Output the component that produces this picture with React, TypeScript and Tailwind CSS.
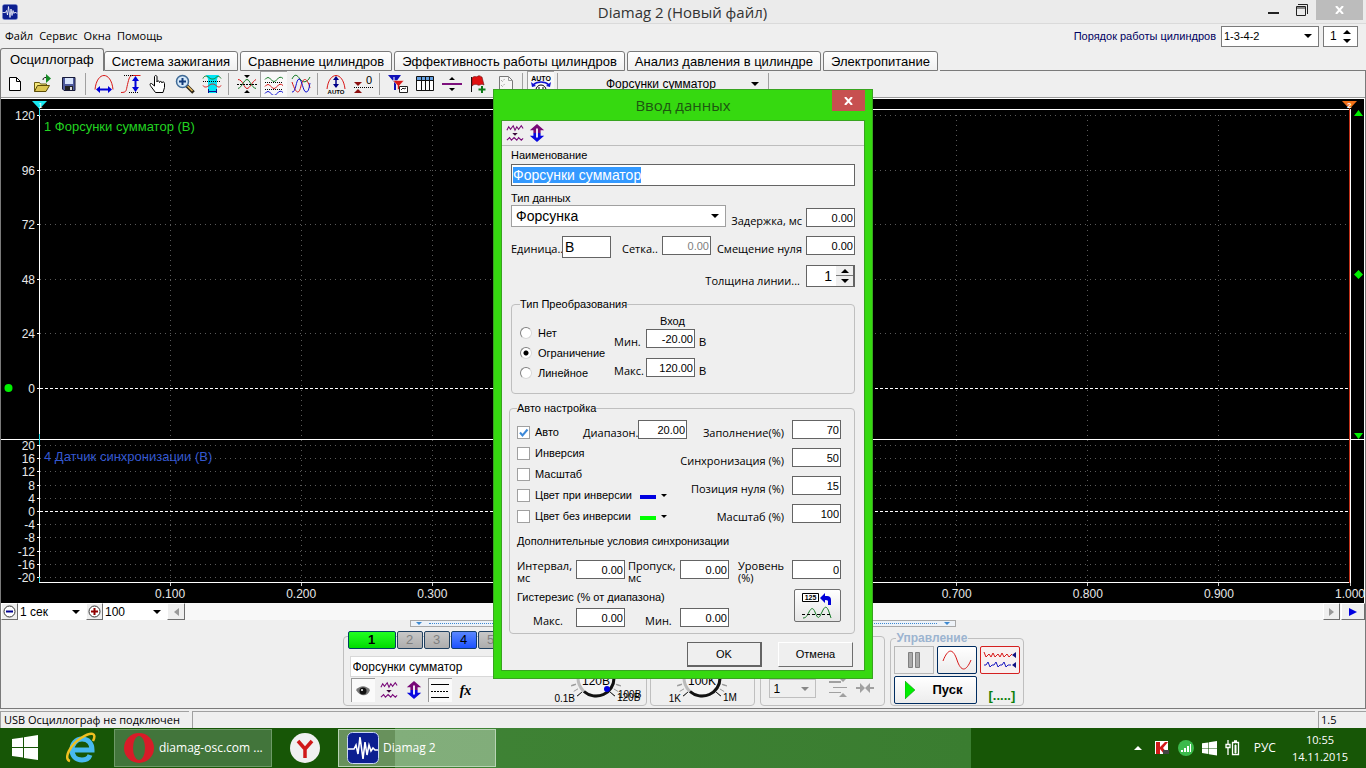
import { useEffect, useRef, type ReactNode } from 'react';
import clsx from 'clsx';

const FINE = "font-['Liberation_Sans',Arial,sans-serif]";
const TAHOMA = "font-['Open_Sans','Noto_Sans',sans-serif]";

/* ---------- small shared controls ---------- */

function DownArrow({ className }: { className?: string }) {
    return (
        <svg viewBox="0 0 8 4" className={clsx('pointer-events-none h-1 w-2', className)} aria-hidden="true">
            <path d="M0 0h8L4 4z" fill="currentColor" />
        </svg>
    );
}

function Combo({ label, value, className, selectClass }: { label: string; value: string; className?: string; selectClass?: string }) {
    return (
        <div className={clsx('relative flex items-center', className)}>
            <select aria-label={label} className={clsx('h-full w-full appearance-none bg-transparent outline-none', selectClass)}>
                <option>{value}</option>
            </select>
            <DownArrow className="absolute right-1.5" />
        </div>
    );
}

function NumField({ id, value, disabled, label }: { id?: string; value: string; disabled?: boolean; label?: string }) {
    return (
        <input
            id={id}
            aria-label={label}
            defaultValue={value}
            disabled={disabled}
            className={clsx(
                'h-[19px] w-[49px] shrink-0 border border-[#646464] bg-white pr-px text-right text-[11px] leading-4 outline-none',
                FINE,
                disabled ? 'text-[#808080]' : 'text-black'
            )}
        />
    );
}

function FieldLabel({ htmlFor, className, children }: { htmlFor: string; className?: string; children: ReactNode }) {
    return (
        <label htmlFor={htmlFor} className={clsx('whitespace-nowrap text-[11px] leading-3', TAHOMA, className)}>
            {children}
        </label>
    );
}

/* ---------- icons ---------- */

function Icon({ children, size = 20 }: { children: ReactNode; size?: number }) {
    return (
        <svg width={size} height={size} viewBox="0 0 20 20" fill="none" aria-hidden="true">
            {children}
        </svg>
    );
}

const NewIcon = () => (
    <Icon>
        <path d="M4.500 3.500h7l4 4v9h-11z" fill="#fff" stroke="#000" />
        <path d="M11.500 3.500v4h4" stroke="#000" />
    </Icon>
);

const OpenIcon = () => (
    <Icon>
        <path d="M2.500 17.500v-9h5l1 1.500h6v2" fill="#f5e97c" stroke="#6b5c10" />
        <path d="M2.500 17.500l3-6h12l-3.500 6z" fill="#dcc653" stroke="#5c4d08" />
        <path d="M11 6c0-2 1-2.500 3-2.500" stroke="#111" />
        <path d="M14 0l5 4.500-5 4.500z" fill="#168a25" />
    </Icon>
);

const SaveIcon = () => (
    <Icon>
        <path d="M3.500 3.500h12.500v13h-11l-1.500-1.500z" fill="#4e5a9c" stroke="#181b3a" />
        <path d="M6 4h8v6H6z" fill="#d8e4fa" />
        <path d="M6 12h8v4H6z" fill="#222" />
        <path d="M11 13h2v3h-2z" fill="#ddd" />
    </Icon>
);

const WidthIcon = () => (
    <Icon>
        <path d="M1 15.500C2 6 6 1.500 10 1.500s8 4.500 9 14" stroke="#d81818" />
        <path d="M4 15.500h12" stroke="#0000d8" strokeWidth="2" />
        <path d="M2 15.500l4-3.500v7zM18 15.500l-4-3.500v7z" fill="#0000d8" />
    </Icon>
);

const HeightIcon = () => (
    <Icon>
        <path d="M0 18.500c6 0 5-2 6.500-8s2-9 5-9h8" stroke="#d81818" />
        <path d="M3 1.500h9M8 18.500h9" stroke="#000" strokeDasharray="1 1" />
        <path d="M14.500 5v10" stroke="#0000d8" strokeWidth="2" />
        <path d="M14.500 2l3.500 5h-7zM14.500 18l3.500-5h-7z" fill="#0000d8" />
    </Icon>
);

const HandIcon = () => (
    <Icon>
        <path
            d="M7.500 18.500L3 12.500c-1.500-2-1-3.500.5-3l3 2.500V3c0-2 2.500-2 2.500 0v5c0-1.500 2.500-1.500 2.500.5 0-1.500 2.500-1.500 2.500.5 0-1.500 2.500-1.500 2.500.5v4l-1.500 5z"
            fill="#fff"
            stroke="#000"
        />
    </Icon>
);

const ZoomIcon = () => (
    <Icon>
        <path d="M11.500 11.500l7 7" stroke="#2b2417" strokeWidth="3.500" />
        <path d="M12.500 12l5 5" stroke="#e9bc60" strokeWidth="1.500" />
        <circle cx="7.500" cy="7.500" r="6" fill="#d4e8f9" stroke="#3f6a96" strokeWidth="1.500" />
        <path d="M7.500 4v7M4 7.500h7" stroke="#123c7c" strokeWidth="2" />
    </Icon>
);

const FitIcon = () => (
    <Icon>
        <path d="M4 1h13l-2 4v14H6V5z" fill="#00e5f5" />
        <path d="M1 4.500c1-3 4-3 6-1s5 2 7 0 4-1 5 1" stroke="#187c28" />
        <path d="M1 11.500c1 2 4 2 6 0s5-2 7 0 4 2 5 0" stroke="#d81818" />
        <path d="M1 7.500h18" stroke="#000" strokeDasharray="1 1" />
        <path d="M6.500 15v4M14.500 15v4M7 17.500h8" stroke="#10108c" />
    </Icon>
);

const CrossWavesIcon = () => (
    <Icon>
        <path d="M1 5.500c5 0 6 9 9 9s5-7 9-9" stroke="#d81818" />
        <path d="M1 14.500c4-1 6-9 9-9s4 8 9 9" stroke="#187c28" />
        <path d="M0 10.500h20" stroke="#000" strokeDasharray="2 1" />
        <path d="M7 1h6l-3 3zM7 19h6l-3-3z" fill="#000" />
    </Icon>
);

const StackWavesIcon = () => (
    <Icon>
        <path d="M1 4.500q3-4 6 0t6 0 6-1" stroke="#187c28" />
        <path d="M1 11.500q3-4 6 0t6 0 6-1" stroke="#d81818" />
        <path d="M1 18.500q3-4 6 0t6 0 6-1" stroke="#1010d0" />
        <path d="M1 7.500h18M1 14.500h18" stroke="#000" strokeDasharray="1 1" />
    </Icon>
);

const OverlayWavesIcon = () => (
    <Icon>
        <path d="M1 5c3-6 5-4 8 0s7 4 10-2" stroke="#187c28" />
        <path d="M1 8c4 12 7 13 9 4s6-9 9 2" stroke="#d81818" />
        <path d="M1 18c4 1 4-13 7-13s4 13 7 13 3-5 4-9" stroke="#1010d0" />
    </Icon>
);

const AutoHumpIcon = () => (
    <Icon>
        <path d="M1 15C2 6 6 1.500 10 1.500S18 6 19 15" stroke="#d81818" />
        <path d="M10 4v9" stroke="#000088" strokeWidth="1.500" />
        <path d="M10 2l3 4H7zM10 14l3-4H7z" fill="#000088" />
        <text x="10" y="20" fontSize="6" fontWeight="bold" textAnchor="middle" fill="#000" fontFamily="Liberation Sans">
            AUTO
        </text>
    </Icon>
);

const ZeroIcon = () => (
    <Icon>
        <path d="M1 8h8l-4 4zM1 19h8l-4-4z" fill="#8c1010" />
        <path d="M1 13.500h19" stroke="#000" strokeDasharray="1 1" />
        <text x="13" y="10" fontSize="11" fill="#000" fontFamily="Liberation Sans">
            0
        </text>
    </Icon>
);

const MarkersIcon = () => (
    <Icon>
        <path d="M0 1h13L8 8v8H6V8z" fill="#1010b8" />
        <path d="M6 3v4" stroke="#fff" />
        <path d="M5 6.500h11l-4.500 5v4h-2v-4z" fill="#d81818" stroke="#fff" strokeWidth=".5" />
        <path d="M11.500 12.500h8v6h-8z" fill="#fff" stroke="#222" />
        <path d="M13 16l2-2 1 1 2-1" stroke="#222" />
    </Icon>
);

const TableIcon = () => (
    <Icon>
        <path d="M1.500 2.500h17v14h-17z" fill="#fff" stroke="#111" />
        <path d="M2 3h16v3H2z" fill="#64a0e0" />
        <path d="M6.500 3v13M10.500 3v13M14.500 3v13M2 6.500h16" stroke="#111" />
    </Icon>
);

const SplitIcon = () => (
    <Icon>
        <path d="M0 10h20" stroke="#7c107c" strokeWidth="2" />
        <path d="M7 6h6l-3-3zM7 14h6l-3 3z" fill="#000" />
    </Icon>
);

const FlagIcon = () => (
    <Icon>
        <path d="M2.500 3v15" stroke="#111" />
        <path d="M3 4c3-3 4 0 6-2 2-1 3 1 4 1l2 8c-3-2-4 1-6 0s-4-1-6 1z" fill="#e01010" stroke="#661010" strokeWidth=".6" />
        <path d="M13 12v7M9.500 15.500h7" stroke="#0d7a18" strokeWidth="2" />
    </Icon>
);

const ListIcon = () => (
    <Icon>
        <path d="M3.500 2.500h9l4 4v12h-13z" fill="#f6f6f6" stroke="#777" />
        <path d="M5 6l1.500 1.500L9 4.500M5 11l1.500 1.500L9 9.500M5 16l1.500 1.500L9 14.500" stroke="#888" strokeDasharray="1 1" />
        <path d="M12.500 2.500v4h4" stroke="#999" />
    </Icon>
);

const AutoClockIcon = () => (
    <Icon>
        <text x="10" y="6" fontSize="7" fontWeight="bold" textAnchor="middle" fill="#000" fontFamily="Liberation Sans">
            AUTO
        </text>
        <path d="M2 10c4-4 12-4 16 0" stroke="#1010d0" strokeWidth="1.500" />
        <path d="M0 7l1 5 4-1zM20 7l-1 5-4-1z" fill="#1010d0" />
        <circle cx="10" cy="15" r="5" fill="#fff" stroke="#000" />
        <path d="M8 12v2M12 12v2" stroke="#000" />
    </Icon>
);

const SquiggleIcon = () => (
    <Icon size={18}>
        <path d="M1 7l2-4 2 3 3-4 2 5 2-4 2 3 3-4 2 3" stroke="#780878" strokeWidth="1.200" />
        <path d="M1 18l3-3 2 3 3-3 3 3 2-3 3 3 2-2" stroke="#780878" strokeWidth="1.200" />
        <path d="M7 10h6l-3 3z" fill="#3a083a" />
    </Icon>
);

const UpDownIcon = () => (
    <Icon size={18}>
        <path d="M10 0l8 7h-4v3H6V7H2z" fill="#780878" />
        <path d="M10 20l8-7h-4v-3H6v3H2z" fill="#0808e0" />
        <path d="M10 5v10" stroke="#fff" strokeWidth="2" />
    </Icon>
);

function AppIcon({ size }: { size: number }) {
    return (
        <svg width={size} height={size} viewBox="0 0 32 32" aria-hidden="true">
            <rect x=".5" y=".5" width="31" height="31" rx="5" fill="#0c1f90" stroke="#c8d4f4" />
            <path d="M1 17h6l2-4 2 9 2-17 3 22 2-17 2 13 2-10 2 6 2-3 2 2h3" fill="none" stroke="#fff" strokeWidth="1.600" />
        </svg>
    );
}

/* ---------- window chrome ---------- */

function TitleBar() {
    return (
        <header className="flex h-6 items-start border-b border-[#dadada] bg-[#ebebeb]">
            <div className="flex flex-1 pt-1 pl-0.5">
                <AppIcon size={16} />
            </div>
            <h1 className={clsx('text-[15px] leading-6 text-[#333]', TAHOMA)}>Diamag 2 (Новый файл)</h1>
            <div className="flex flex-1 justify-end pr-[3px]">
                <button type="button" aria-label="Свернуть" className="flex h-5 w-7 items-center justify-center">
                    <svg width="12" height="12"><path d="M0 8h11v2H0z" fill="#222" /></svg>
                </button>
                <button type="button" aria-label="Развернуть" className="flex h-5 w-7 items-center justify-center">
                    <svg width="12" height="12" fill="none" stroke="#222">
                        <path d="M.5 2.500h9v9h-9zM.5 4h9M2 .5h9.500V10" />
                    </svg>
                </button>
                <button type="button" aria-label="Закрыть" className="flex h-5 w-[47px] items-center justify-center bg-[#bcbcbc]">
                    <svg width="9" height="8"><path d="M1 0l7 8M8 0L1 8" stroke="#fff" strokeWidth="2" /></svg>
                </button>
            </div>
        </header>
    );
}

function MenuBar() {
    return (
        <div className="flex h-6 items-center pr-2">
            <nav className={clsx('flex gap-1.5 pt-px pl-[5px] text-[11px]', TAHOMA)}>
                {['Файл', 'Сервис', 'Окна', 'Помощь'].map(item => (
                    <button key={item} type="button">{item}</button>
                ))}
            </nav>
            <label htmlFor="order" className="ml-auto text-[11px] text-[#000060]">Порядок работы цилиндров</label>
            <div className="relative ml-[5px] flex h-[21px] w-[98px] items-center border border-[#7a7a7a] bg-white">
                <select id="order" className="h-full w-full appearance-none pl-0.5 text-[11px] outline-none">
                    <option>1-3-4-2</option>
                </select>
                <DownArrow className="absolute right-1.5" />
            </div>
            <div className="ml-1 flex h-[21px] w-[35px] items-center border border-[#7a7a7a] bg-white pr-1.5">
                <input aria-label="Цилиндр" defaultValue="1" className="w-[14px] pl-1.5 text-[12px] outline-none" />
                <div className="ml-auto flex flex-col gap-[5px]">
                    <button type="button" aria-label="Больше"><DownArrow className="rotate-180" /></button>
                    <button type="button" aria-label="Меньше"><DownArrow /></button>
                </div>
            </div>
        </div>
    );
}

const TABS = [
    'Осциллограф',
    'Система зажигания',
    'Сравнение цилиндров',
    'Эффективность работы цилиндров',
    'Анализ давления в цилиндре',
    'Электропитание'
];

function Tabs() {
    return (
        <div role="tablist" className="flex h-[23px] items-end">
            {TABS.map((tab, i) => (
                <button
                    key={tab}
                    role="tab"
                    type="button"
                    aria-selected={i === 0}
                    className={clsx(
                        'whitespace-nowrap rounded-t-[3px] border border-[#7a7a7a] text-[13px]',
                        i === 0 ? 'h-[23px] border-b-0 px-[9px]' : 'mr-0.5 h-5 bg-linear-to-b from-white to-[#f0f0f0] px-[7px]'
                    )}
                >
                    {tab}
                </button>
            ))}
            <div className="flex-1 self-end border-b border-[#7a7a7a]" />
        </div>
    );
}

type Tool = { name: string; icon: ReactNode; pressed?: boolean };

const TOOL_GROUPS: Tool[][] = [
    [
        { name: 'Новый', icon: <NewIcon /> },
        { name: 'Открыть', icon: <OpenIcon /> },
        { name: 'Сохранить', icon: <SaveIcon /> }
    ],
    [
        { name: 'Ширина', icon: <WidthIcon /> },
        { name: 'Высота', icon: <HeightIcon /> },
        { name: 'Рука', icon: <HandIcon /> },
        { name: 'Лупа', icon: <ZoomIcon /> },
        { name: 'Вписать', icon: <FitIcon /> }
    ],
    [
        { name: 'Совместить', icon: <CrossWavesIcon /> },
        { name: 'Раздельно', icon: <StackWavesIcon />, pressed: true },
        { name: 'Наложение', icon: <OverlayWavesIcon /> }
    ],
    [
        { name: 'Авто', icon: <AutoHumpIcon /> },
        { name: 'Ноль', icon: <ZeroIcon /> }
    ],
    [
        { name: 'Маркеры', icon: <MarkersIcon /> },
        { name: 'Таблица', icon: <TableIcon /> },
        { name: 'Разделить', icon: <SplitIcon /> },
        { name: 'Флаг', icon: <FlagIcon /> },
        { name: 'Список', icon: <ListIcon /> }
    ],
    [{ name: 'Автонастройка', icon: <AutoClockIcon />, pressed: true }]
];

function Toolbar() {
    return (
        <div className="flex h-[27px] items-center border-b border-[#9a9a9a]">
            {TOOL_GROUPS.map((group, i) => (
                <div key={i} className="flex items-center">
                    {group.map(tool => (
                        <button
                            key={tool.name}
                            type="button"
                            aria-label={tool.name}
                            className={clsx(
                                'flex h-[26px] w-[27px] items-center justify-center',
                                tool.pressed && 'border-t border-l border-[#a0a0a0] bg-[#f8f8f8]'
                            )}
                        >
                            {tool.icon}
                        </button>
                    ))}
                    <div className="mr-1 ml-[3px] h-[22px] w-px bg-[#a0a0a0]" />
                </div>
            ))}
            <Combo label="Канал" value="Форсунки сумматор" className="h-5 w-[203px]" selectClass="pl-11 text-[12px]" />
            <div className="ml-[3px] h-[22px] w-px bg-[#a0a0a0]" />
        </div>
    );
}

/* ---------- chart ---------- */

const UPPER = [
    { v: '120', y: 16 },
    { v: '96', y: 71 },
    { v: '72', y: 125 },
    { v: '48', y: 180 },
    { v: '24', y: 234 },
    { v: '0', y: 289 }
];

const LOWER = [
    { v: '20', y: 346 },
    { v: '16', y: 359 },
    { v: '12', y: 372 },
    { v: '8', y: 386 },
    { v: '4', y: 399 },
    { v: '0', y: 412 },
    { v: '-4', y: 425 },
    { v: '-8', y: 438 },
    { v: '-12', y: 452 },
    { v: '-16', y: 465 },
    { v: '-20', y: 478 }
];

const LEVELS = [...UPPER, ...LOWER];
const TIMES = ['0.100', '0.200', '0.300', '0.400', '0.500', '0.600', '0.700', '0.800', '0.900', '1.000'];

function Chart() {
    return (
        <div className="flex h-[505px] border-t border-r border-white bg-black">
            <svg width="38" height="504" className="shrink-0" fontSize="12" fill="#e8e8e8">
                {LEVELS.map(l => (
                    <g key={l.y}>
                        <text x="34" y={l.y + 5} textAnchor="end">{l.v}</text>
                        <path d={`M36 ${l.y}h2v1h-2z`} fill="#fff" />
                    </g>
                ))}
                <circle cx="7.500" cy="289" r="4" fill="#00f000" />
                <path d="M0 340h38v1H0z" fill="#fff" />
            </svg>
            <div className="min-w-0 flex-1">
                <svg width="100%" height="504" className="block overflow-visible" fontSize="12">
                    <g shapeRendering="crispEdges">
                        {LEVELS.map(l => (
                            <line
                                key={l.y}
                                x1="1"
                                x2="100%"
                                y1={l.y + 0.5}
                                y2={l.y + 0.5}
                                stroke={l.v === '0' ? '#fff' : '#5a5a5a'}
                                strokeDasharray={l.v === '0' ? '3 2' : '1 4'}
                            />
                        ))}
                        {TIMES.map((t, i) => (
                            <g key={t}>
                                <line x1={`${(i + 1) * 10}%`} x2={`${(i + 1) * 10}%`} y1="16" y2="483" stroke="#5a5a5a" strokeDasharray="1 4" />
                                <line x1={`${(i + 1) * 10}%`} x2={`${(i + 1) * 10}%`} y1="483" y2="487" stroke="#ccc" />
                            </g>
                        ))}
                        <line x1="0" x2="100%" y1="10.500" y2="10.500" stroke="#fff" />
                        <line x1="0" x2="100%" y1="340.500" y2="340.500" stroke="#fff" />
                        <line x1="0" x2="100%" y1="483.500" y2="483.500" stroke="#fff" />
                        <path d="M.5 10v474" stroke="#fff" />
                        <path d="M.5 9v8M.5 335v11M.5 478v5" stroke="#20d8e0" />
                    </g>
                    {TIMES.map((t, i) => (
                        <text key={t} x={`${(i + 1) * 10}%`} y="499" textAnchor="middle" fill="#e8e8e8">{t}</text>
                    ))}
                    <path d="M-7 2H8L.5 10z" fill="#18e8f0" />
                    <text x="-1" y="9" fontSize="8" fill="#fff">1</text>
                    <text x="5" y="32" fontSize="13" fill="#22d422">1 Форсунки сумматор (В)</text>
                    <text x="5" y="362" fontSize="13" fill="#3458d0">4 Датчик синхронизации (В)</text>
                </svg>
            </div>
            <svg width="14" height="504" className="shrink-0 overflow-visible">
                <path d="M0 10h1v474H0z" fill="#fff" />
                <path d="M-1 10h1v474h-1z" fill="#c03018" />
                <path d="M0 340h14v1H0z" fill="#fff" />
                <path d="M-8 2H7L-.5 10z" fill="#f07018" />
                <text x="-3" y="9" fontSize="8" fontWeight="bold" fill="#fff">2</text>
                <path d="M4 17h9l-4.500-6zM4 334h9l-4.500 6zM8.500 171l4.500 4.500-4.500 4.500-4.500-4.500z" fill="#00f000" />
            </svg>
        </div>
    );
}

const raised = 'border border-t-white border-l-white border-r-[#6e6e6e] border-b-[#6e6e6e] bg-[#efefef]';

function ScrollRow() {
    return (
        <div className="flex h-[17px] items-stretch bg-[#f8f8f8] text-[12px]">
            <button type="button" aria-label="Сжать" className={clsx('flex w-[17px] items-center justify-center', raised)}>
                <svg width="13" height="13" fill="none"><circle cx="6.500" cy="6.500" r="5.500" stroke="#333" fill="#fff" /><path d="M3 6.500h7" stroke="#000090" strokeWidth="2" /></svg>
            </button>
            <Combo label="Развёртка" value="1 сек" className="w-[68px] bg-white" selectClass="pl-0.5" />
            <button type="button" aria-label="Растянуть" className={clsx('flex w-[17px] items-center justify-center', raised)}>
                <svg width="13" height="13" fill="none"><circle cx="6.500" cy="6.500" r="5.500" stroke="#333" fill="#fff" /><path d="M3 6.500h7M6.500 3v7" stroke="#900000" strokeWidth="2" /></svg>
            </button>
            <Combo label="Масштаб времени" value="100" className="w-16 bg-white" selectClass="pl-0.5" />
            <button type="button" aria-label="Назад" className={clsx('flex w-[18px] items-center justify-center', raised)}>
                <svg width="5" height="8"><path d="M5 0v8L0 4z" fill="#999" /></svg>
            </button>
            <div className="flex-1" />
            <button type="button" aria-label="Вперёд" className={clsx('flex w-[17px] items-center justify-center', raised)}>
                <svg width="5" height="8"><path d="M0 0v8l5-4z" fill="#999" /></svg>
            </button>
            <button type="button" aria-label="В конец" className={clsx('ml-px flex w-6 items-center justify-center', raised)}>
                <svg width="8" height="8"><path d="M0 0v8l8-4z" fill="#0000e0" /></svg>
            </button>
        </div>
    );
}

/* ---------- channel panel ---------- */

function Knob({ value, left, right, extra }: { value: string; left: string; right: string; extra?: string }) {
    const ticks = [...Array(11).keys()].map(i => ((135 + i * 27) * Math.PI) / 180);
    return (
        <svg width="92" height="64" fontSize="10" className="shrink-0">
            {[...ticks, 0.3, 0.55, 2.6, 2.85].map(a => (
                <line
                    key={a}
                    x1={43 + Math.cos(a) * 21}
                    y1={38 + Math.sin(a) * 21}
                    x2={43 + Math.cos(a) * 26}
                    y2={38 + Math.sin(a) * 26}
                    stroke="#999"
                />
            ))}
            <circle cx="43" cy="38" r="18" fill="#f4f4f4" stroke="#bbb" strokeWidth="3" />
            <path d="M31 51.500A18 18 0 0 0 61 38" fill="none" stroke="#111" strokeWidth="3" />
            <text x="43" y="45" fontSize="12" textAnchor="middle">{value}</text>
            {extra && <circle cx="54" cy="49" r="3" fill="#0000e0" />}
            <path d="M29 52l-5 4M57 52l5 4" stroke="#222" />
            <text x="22" y="62" textAnchor="end">{left}</text>
            <text x="64" y="61">{right}</text>
            {extra && <text x="65" y="58">{extra}</text>}
        </svg>
    );
}

const CHANNELS = [1, 2, 3, 4, 5, 6, 7, 8];

function ChannelPanel() {
    return (
        <div className="relative h-[76px] w-[304px] shrink-0 pt-px">
            <div className="absolute inset-x-0 top-1.5 bottom-0 rounded border border-[#bfbfbf]" />
            <div className="relative flex gap-px overflow-hidden px-[5px]">
                {CHANNELS.map(n => (
                    <button
                        key={n}
                        type="button"
                        className={clsx(
                            'h-[18px] shrink-0 rounded-[2px] border text-[13px] leading-4',
                            n === 1 && 'w-12 border-[#004060] bg-linear-to-b from-[#20ff20] to-[#00dc00] font-bold text-black',
                            n === 4 && 'w-[26px] border-[#103c70] bg-linear-to-b from-[#5a86ff] to-[#1c50ff] text-black',
                            n !== 1 && n !== 4 && 'w-[26px] border-[#204060] bg-linear-to-b from-[#c8c8c8] to-[#adadad] text-[#808080]'
                        )}
                    >
                        {n}
                    </button>
                ))}
            </div>
            <div className="relative mt-[7px] ml-[7px] flex h-[21px]">
                <Combo label="Имя канала" value="Форсунки сумматор" className="w-[180px] border border-[#d8d8d8] bg-white" selectClass="pl-0.5 text-[12px]" />
            </div>
            <div className="relative mt-px ml-2 flex h-6 items-center gap-[3px]">
                <button type="button" aria-label="Видимость" className="flex size-6 items-center justify-center border-t border-l border-[#999] bg-[#fafafa]">
                    <svg width="14" height="10"><path d="M0 4C4-1 10-1 14 4c-2 7-10 7-14 0z" fill="#777" /><circle cx="7" cy="5" r="3.500" fill="#111" /><circle cx="6" cy="4" r="1" fill="#fff" /></svg>
                </button>
                <button type="button" aria-label="Сигнал" className="flex w-[22px] justify-center"><SquiggleIcon /></button>
                <button type="button" aria-label="Сдвиг" className="flex w-[22px] justify-center"><UpDownIcon /></button>
                <button type="button" aria-label="Линии" className="flex size-6 items-center justify-center border-t border-l border-[#999] bg-[#fafafa]">
                    <svg width="18" height="14" fill="none" stroke="#000"><path d="M0 .5h18M0 13.500h18" /><path d="M0 7.500h18" strokeDasharray="2 1" /></svg>
                </button>
                <button type="button" className="w-[22px] font-['Liberation_Serif',serif] text-[14px] font-bold italic">fx</button>
            </div>
            <div className="absolute right-0.5 bottom-0.5 flex">
                <Knob value="120В" left="0.1В" right="120В" extra="100В" />
            </div>
        </div>
    );
}

function BottomPanel() {
    return (
        <div className="flex-1 border-b border-[#7a7a7a] pb-0.5">
            <div className="mx-auto flex h-[7px] w-[546px] items-center justify-between border border-[#a8a8a8] bg-[#edf2f8] px-1 text-[#3c88d0]">
                <DownArrow className="h-[3px]" />
                <div className="mx-1.5 flex-1 border-t border-dotted border-[#3c88d0]" />
                <DownArrow className="h-[3px]" />
            </div>
            <div className="mx-auto flex h-[79px] w-[681px] items-end">
                <ChannelPanel />
                <div className="ml-[3px] flex h-[70px] w-[105px] items-end justify-end overflow-hidden rounded border border-[#bfbfbf] pr-[3px] pb-px">
                    <Knob value="100K" left="1K" right="1M" />
                </div>
                <div className="ml-[5px] flex h-[70px] w-[125px] items-end gap-[9px] rounded border border-[#bfbfbf] pb-[7px] pl-2 text-[#888]">
                    <Combo label="Множитель" value="1" className="h-[19px] w-[47px] border border-[#bfbfbf]" selectClass="pl-1 text-[12px] text-black" />
                    <svg width="18" height="20" fill="#a0a0a0" className="ml-1">
                        <path d="M0 3h12v2H0zM10 0h8l-4 4zM0 14h12v1H0zM10 19h8l-4-4zM4 9h14v1H4z" />
                    </svg>
                    <svg width="18" height="20" fill="#a0a0a0">
                        <path d="M0 9h4V5l5 5-5 5v-4H0zM18 9h-4V5l-5 5 5 5v-4h4z" />
                    </svg>
                </div>
                <fieldset className="ml-[5px] h-[75px] w-[134px] rounded border border-[#bfbfbf] pl-[3px]">
                    <legend className="ml-[2px] px-px text-[12px] leading-[14px] font-bold text-[#9cb4d0]">Управление</legend>
                    <div className="mt-px flex gap-[3px]">
                        <button type="button" aria-label="Пауза" className="flex h-7 w-10 items-center justify-center border border-[#b8b8b8]">
                            <svg width="12" height="16" fill="#aaa" stroke="#808080"><path d="M.5.5h4v15h-4zM7.500.5h4v15h-4z" /></svg>
                        </button>
                        <button type="button" aria-label="Синус" className="flex h-7 w-10 items-center justify-center rounded-[2px] border border-[#002c60] bg-linear-to-b from-white to-[#ececec]">
                            <svg width="30" height="20" fill="none"><path d="M1 11C6-2 11-2 15 10s9 12 14 0" stroke="#d81818" /></svg>
                        </button>
                        <button type="button" aria-label="Поток" className="flex h-7 w-10 items-center justify-center rounded-[2px] border border-[#d42020] bg-[#f8f0f0]">
                            <svg width="34" height="20" fill="none">
                                <path d="M1 2l2 5 3-3 2 3 2-4 2 4 3-3 2 3 2-4 2 4 3-3 2 3 3-3" stroke="#d81818" />
                                <path d="M1 15h2l2-3 2 5 2-2h2l2-3 2 5 2-2h2l2-3 2 5 2-2h3" stroke="#1818c0" />
                                <path d="M33 2v6l-4-3zM33 12v6l-4-3z" fill="#101080" />
                            </svg>
                        </button>
                    </div>
                    <div className="mt-0.5 flex items-end gap-3">
                        <button type="button" className="flex h-7 w-[83px] items-center rounded-[2px] border border-[#002c60] bg-linear-to-b from-white to-[#ececec] pl-2.5 text-[13px] font-bold">
                            <svg width="10" height="18"><path d="M0 0v18l10-9z" fill="#00ee00" stroke="#108010" strokeWidth=".5" /></svg>
                            <span className="ml-[18px]">Пуск</span>
                        </button>
                        <span className="text-[13px] leading-4 font-bold text-[#0c800c]">[.....]</span>
                    </div>
                </fieldset>
            </div>
        </div>
    );
}

function StatusBar() {
    return (
        <footer className={clsx('flex h-[19px] gap-[3px] pt-0.5 text-[11px] leading-4', TAHOMA)}>
            <div className="w-[189px] border-t border-l border-[#a0a0a0] pl-[3px] whitespace-nowrap">USB Осциллограф не подключен</div>
            <div className="flex-1 border-t border-l border-[#a0a0a0]" />
            <div className="w-12 border-t border-l border-[#a0a0a0] pl-0.5">1.5</div>
        </footer>
    );
}

/* ---------- dialog ---------- */

const RIGHT_FIELDS = [
    { id: 'fill', label: 'Заполнение(%)', value: '70' },
    { id: 'sync', label: 'Синхронизация (%)', value: '50' },
    { id: 'zeroPos', label: 'Позиция нуля (%)', value: '15' },
    { id: 'scale', label: 'Масштаб (%)', value: '100' }
];

function Tick({ label, checked, className }: { label: string; checked?: boolean; className?: string }) {
    return (
        <label className={clsx('flex h-[21px] items-center gap-[5px] text-[11px] whitespace-nowrap', className)}>
            <span className="relative flex size-[13px]">
                <input type="checkbox" defaultChecked={checked} className="peer size-[13px] appearance-none border border-[#a0a0a0] bg-white" />
                <svg viewBox="0 0 13 13" className="pointer-events-none absolute inset-0 hidden peer-checked:block" fill="none">
                    <path d="M3 6.500l2.500 3 5-6" stroke="#3c88d8" strokeWidth="2" />
                </svg>
            </span>
            {label}
        </label>
    );
}

function Radio({ label, checked }: { label: string; checked?: boolean }) {
    return (
        <label className="flex h-5 items-center gap-1.5 text-[11px]">
            <input
                type="radio"
                name="transform"
                defaultChecked={checked}
                className="size-3 appearance-none rounded-full border border-t-[#808080] border-r-[#d8d8d8] border-b-[#d8d8d8] border-l-[#808080] bg-white checked:bg-[radial-gradient(circle,#000_2px,#fff_3px)]"
            />
            {label}
        </label>
    );
}

function NameInput() {
    const ref = useRef<HTMLInputElement>(null);

    useEffect(() => {
        ref.current?.focus();
        ref.current?.select();
    }, []);

    return (
        <input
            id="name"
            ref={ref}
            defaultValue="Форсунки сумматор"
            className="h-[22px] w-full border border-[#646464] bg-white px-px text-[14px] leading-4 outline-none selection:bg-[#3399ff] selection:text-white"
        />
    );
}

function ColorPick({ label, swatch }: { label: string; swatch: string }) {
    return (
        <div className="flex items-center">
            <Tick label={label} className="w-[123px]" />
            <button type="button" aria-label={label} className="flex items-center gap-1">
                <span className={clsx('mt-0.5 h-1 w-4', swatch)} />
                <DownArrow className="h-[3px] w-1.5" />
            </button>
        </div>
    );
}

function DataDialog() {
    return (
        <div
            role="dialog"
            aria-labelledby="dialogTitle"
            className="absolute top-[89px] left-1/2 z-10 w-[380px] -translate-x-1/2 border border-[#38a420] bg-[#36d910] px-[7px] pb-[7px]"
        >
            <div className="relative flex h-[30px] items-center justify-center">
                <h2 id="dialogTitle" className={clsx('text-[15px] text-[#1d5510]', TAHOMA)}>Ввод данных</h2>
                <button type="button" aria-label="Закрыть" className="absolute top-0 right-0 flex h-[21px] w-[33px] items-center justify-center bg-[#c75050]">
                    <svg width="9" height="8"><path d="M1 0l7 8M8 0L1 8" stroke="#fff" strokeWidth="2" /></svg>
                </button>
            </div>
            <div className="border border-[#38a420] bg-[#efefef]">
                <div className="flex h-[25px] items-center gap-1 border-b border-[#bdbdbd] pl-1">
                    <button type="button" aria-label="Сигнал"><SquiggleIcon /></button>
                    <button type="button" aria-label="Сдвиг"><UpDownIcon /></button>
                </div>
                <form className="pr-[9px] pb-[3px] pl-[9px] text-[11px]">
                    <label htmlFor="name" className="block leading-[18px]">Наименование</label>
                    <NameInput />
                    <div className="flex h-[19px] items-end leading-[14px]">Тип данных</div>
                    <div className="mb-[9px] flex h-[22px] items-end">
                        <Combo
                            label="Тип данных"
                            value="Форсунка"
                            className="h-[22px] w-[215px] border border-[#a0a0a0] bg-white"
                            selectClass="pl-1 text-[14px]"
                        />
                        <FieldLabel htmlFor="delay" className="mr-1 ml-auto">Задержка, мс</FieldLabel>
                        <NumField id="delay" value="0.00" />
                    </div>
                    <div className="mb-[7px] flex h-[22px] items-start">
                        <FieldLabel htmlFor="unit" className="w-[51px] leading-[26px]">Единица..</FieldLabel>
                        <input id="unit" defaultValue="В" className="h-[22px] w-[49px] border border-[#646464] bg-white pl-0.5 text-[14px] outline-none" />
                        <FieldLabel htmlFor="gridStep" className="ml-[11px] w-10 leading-[26px]">Сетка..</FieldLabel>
                        <NumField id="gridStep" value="0.00" disabled />
                        <FieldLabel htmlFor="offset" className="mr-1 ml-auto leading-[26px]">Смещение нуля</FieldLabel>
                        <NumField id="offset" value="0.00" />
                    </div>
                    <div className="flex h-[22px] items-end justify-end">
                        <FieldLabel htmlFor="thickness" className="mr-1.5">Толщина линии...</FieldLabel>
                        <div className="flex h-[22px] w-[49px] border border-[#646464] border-r-2 bg-white">
                            <input id="thickness" defaultValue="1" className="w-[29px] pr-1 text-right text-[14px] outline-none" />
                            <div className="flex flex-1 flex-col bg-[#efefef]">
                                <button type="button" aria-label="Больше" className="flex h-2.5 items-center justify-center border-b border-[#777]">
                                    <DownArrow className="rotate-180" />
                                </button>
                                <button type="button" aria-label="Меньше" className="flex h-2.5 items-center justify-center">
                                    <DownArrow />
                                </button>
                            </div>
                        </div>
                    </div>

                    <fieldset className="mt-[9px] flex h-[98px] rounded border border-[#bfbfbf] pt-px pl-2">
                        <legend className="text-[11px] leading-4">Тип Преобразования</legend>
                        <div className="w-[94px] shrink-0 pt-2.5">
                            <Radio label="Нет" />
                            <Radio label="Ограничение" checked />
                            <Radio label="Линейное" />
                        </div>
                        <div>
                            <div className="pl-[46px] leading-4">Вход</div>
                            <div className="mb-2.5 flex h-[19px] items-end">
                                <FieldLabel htmlFor="inMin" className="w-8">Мин.</FieldLabel>
                                <NumField id="inMin" value="-20.00" />
                                <span className="ml-1 leading-3">В</span>
                            </div>
                            <div className="flex h-[19px] items-end">
                                <FieldLabel htmlFor="inMax" className="w-8">Макс.</FieldLabel>
                                <NumField id="inMax" value="120.00" />
                                <span className="ml-1 leading-3">В</span>
                            </div>
                        </div>
                    </fieldset>

                    <fieldset className="mt-1.5 -ml-0.5 min-w-0 rounded border border-[#bfbfbf] pr-[13px] pb-1.5 pl-[7px]">
                        <legend className="text-[11px] leading-4">Авто настройка</legend>
                        <div className="flex pt-1">
                            <div className="w-[170px] shrink-0">
                                <div className="flex h-[23px] items-end">
                                    <Tick label="Авто" checked className="w-[66px]" />
                                    <FieldLabel htmlFor="range" className="w-[55px] leading-5">Диапазон..</FieldLabel>
                                    <div className="self-start"><NumField id="range" value="20.00" /></div>
                                </div>
                                <Tick label="Инверсия" />
                                <Tick label="Масштаб" />
                                <ColorPick label="Цвет при инверсии" swatch="bg-[#0000e0]" />
                                <ColorPick label="Цвет без инверсии" swatch="bg-[#00ff00]" />
                            </div>
                            <div className="flex min-w-0 flex-1 flex-col gap-[9px]">
                                {RIGHT_FIELDS.map(f => (
                                    <div key={f.id} className="flex h-[19px] items-end justify-end gap-2">
                                        <FieldLabel htmlFor={f.id}>{f.label}</FieldLabel>
                                        <NumField id={f.id} value={f.value} />
                                    </div>
                                ))}
                            </div>
                        </div>
                        <p className="mt-1.5 leading-4">Дополнительные условия синхронизации</p>
                        <div className="mt-[11px] flex h-6 items-start">
                            <FieldLabel htmlFor="interval" className="w-[59px]">Интервал,<br />мс</FieldLabel>
                            <NumField id="interval" value="0.00" />
                            <FieldLabel htmlFor="skip" className="ml-[3px] w-[52px]">Пропуск,<br />мс</FieldLabel>
                            <NumField id="skip" value="0.00" />
                            <FieldLabel htmlFor="level" className="ml-[9px] w-[54px]">Уровень<br />(%)</FieldLabel>
                            <NumField id="level" value="0" />
                        </div>
                        <div className="mt-[5px] flex items-start justify-between">
                            <div>
                                <p className="leading-4">Гистерезис (% от диапазона)</p>
                                <div className="mt-[3px] flex h-[19px] items-end">
                                    <FieldLabel htmlFor="hMax" className="w-[59px] pl-4">Макс.</FieldLabel>
                                    <NumField id="hMax" value="0.00" />
                                    <FieldLabel htmlFor="hMin" className="w-[55px] pl-5">Мин.</FieldLabel>
                                    <NumField id="hMin" value="0.00" />
                                </div>
                            </div>
                            <button type="button" aria-label="Применить к сигналу" className="flex h-[33px] w-[47px] items-center justify-center rounded-[2px] border border-[#707070] bg-linear-to-b from-white to-[#e6e6e6]">
                                <svg width="32" height="28" fill="none">
                                    <path d="M.5 1.500h16v8h-16z" fill="#fff" stroke="#000" />
                                    <text x="8.500" y="8" fontSize="7" fontWeight="bold" textAnchor="middle" fill="#000">125</text>
                                    <path d="M18 6l5-5v3h2q4 0 4 4v5h-3V9q0-1-3-1v3z" fill="#0000d8" />
                                    <path d="M1 26c3 0 4-2 6-6s4-5 6 0 3 7 5 4l3-6c2-4 4-4 6 2l2 6" stroke="#187c28" />
                                    <path d="M0 22.500h30" stroke="#000" strokeDasharray="3 2" />
                                </svg>
                            </button>
                        </div>
                    </fieldset>

                    <div className="mt-2 flex justify-end gap-4 pr-0.5">
                        <button type="button" className="h-[25px] w-[75px] border border-r-2 border-b-2 border-[#646464]">OK</button>
                        <button type="button" className={clsx('h-[25px] w-[75px]', raised)}>Отмена</button>
                    </div>
                </form>
            </div>
        </div>
    );
}

/* ---------- taskbar ---------- */

const WindowsLogo = ({ size }: { size: number }) => (
    <svg width={size} height={size} viewBox="0 0 26 26" fill="#fff" aria-hidden="true">
        <path d="M0 4l11-1.500V12H0zM12 2.300L26 0v12H12zM0 13h11v9.500L0 21zM12 13h14v12l-14-2z" />
    </svg>
);

function Taskbar() {
    return (
        <div
            className={clsx(
                'flex h-10 items-center bg-[linear-gradient(90deg,#175606_395px,#3f8335_395px,#3a7d30_971px,#175606_971px)] text-[12px] text-white',
                TAHOMA
            )}
        >
            <button type="button" aria-label="Пуск Windows" className="ml-3"><WindowsLogo size={26} /></button>
            <button type="button" aria-label="Internet Explorer" className="ml-7">
                <svg width="30" height="32" fill="none">
                    <path d="M6 18h20c0-7-4-11-10-11S6 12 6 18s4 10 10 10c4 0 7-2 8-5" stroke="#48baf0" strokeWidth="5" />
                    <path d="M4 29C-3 27 4 13 15 6S31 1 27 9" stroke="#f0c020" strokeWidth="2.500" />
                </svg>
            </button>
            <button type="button" className="ml-[18px] flex h-[38px] w-[158px] items-center gap-1 border border-[#6d9a66] bg-[#42753b] pl-2">
                <svg width="32" height="32">
                    <ellipse cx="16" cy="16" rx="15" ry="15" fill="#d81c28" />
                    <ellipse cx="16" cy="16" rx="6" ry="12" fill="#42753b" />
                </svg>
                diamag-osc.com ...
            </button>
            <button type="button" aria-label="Яндекс" className="ml-[18px]">
                <svg width="30" height="30" fill="none">
                    <circle cx="15" cy="15" r="15" fill="#f0f0f0" />
                    <path d="M8 8l7 8 7-8M15 16v9" stroke="#d01818" strokeWidth="3.500" />
                </svg>
            </button>
            <button type="button" className="ml-[18px] flex h-[38px] w-[158px] items-center gap-1 border border-[#b8d4b4] bg-white/35 pl-2">
                <AppIcon size={32} />
                Diamag 2
            </button>
            <div className="ml-auto flex items-center gap-2 pr-[18px]">
                <button type="button" aria-label="Показать скрытые значки" className="mr-1"><DownArrow className="rotate-180" /></button>
                <svg width="16" height="16">
                    <path d="M1 1h13v13H1z" fill="#fff" />
                    <path d="M2 2h4v5l5-5h3l-5 6 5 6h-4L6 9v5H2z" fill="#d01818" />
                    <path d="M9 10h6v4H9z" fill="#444" />
                </svg>
                <svg width="16" height="16">
                    <circle cx="8" cy="8" r="8" fill="#3cba4c" />
                    <path d="M3 10h2v2H3zM6 8h2v4H6zM9 6h2v6H9zM12 4h1v8h-1z" fill="#fff" />
                </svg>
                <WindowsLogo size={15} />
                <svg width="15" height="16" fill="none" stroke="#fff">
                    <path d="M3 0v4M1 4.500h4v3H1zM3 8v7M7.500 2.500h6v12h-6zM9 1h3" strokeWidth="1.300" />
                    <path d="M10 5h1v8h-1z" fill="#fff" />
                </svg>
                <span className="ml-1.5">РУС</span>
                <time className="ml-2 text-center text-[11px] leading-[17px]">
                    10:55
                    <br />
                    14.11.2015
                </time>
            </div>
        </div>
    );
}

export default function App() {
    return (
        <div className={clsx('relative flex min-h-screen flex-col overflow-hidden bg-[#efefef] text-black', FINE)}>
            <TitleBar />
            <MenuBar />
            <Tabs />
            <main className="flex flex-1 flex-col border-x border-[#7a7a7a]">
                <Toolbar />
                <Chart />
                <ScrollRow />
                <BottomPanel />
            </main>
            <StatusBar />
            <Taskbar />
            <DataDialog />
        </div>
    );
}
